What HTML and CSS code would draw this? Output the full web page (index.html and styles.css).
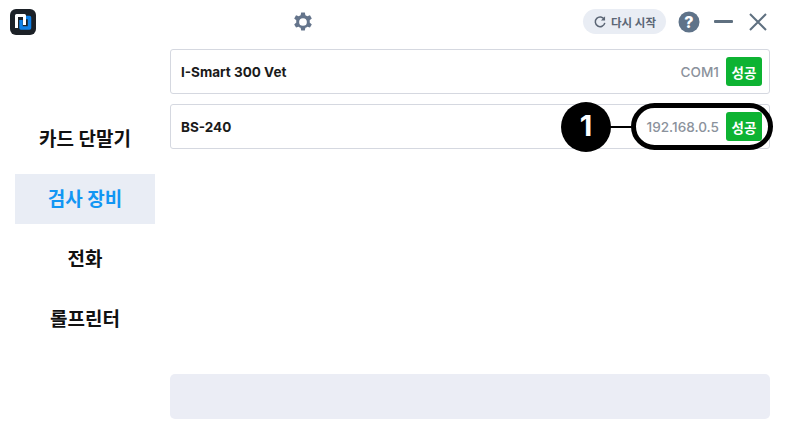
FILE: index.html
```html
<!DOCTYPE html>
<html lang="ko">
<head>
    <meta charset="UTF-8" />
    <title>장비 설정</title>
    <link rel="stylesheet" href="styles.css">
</head>
<body>
    <div class="app">
        <header class="titlebar">
            <svg class="logo" viewBox="0 0 26 26">
                <rect width="26" height="26" rx="6" fill="#1c2127" />
                <path d="M11 11v8h8.500V8.500H16" fill="none" stroke="#0f80e6" stroke-width="3.500" stroke-linejoin="round" />
                <path d="M6.500 19V6.500h8V16" fill="none" stroke="#fff" stroke-width="3" stroke-linejoin="round" />
            </svg>
            <button class="gear-btn">
                <svg viewBox="0 0 24 24" width="22" height="22">
                    <path fill="#64748b" fill-rule="evenodd" d="M10 1.500h4l.6 3a8 8 0 0 1 2.100 1.200l2.900-1 2 3.500-2.300 2a8 8 0 0 1 0 2.400l2.300 2-2 3.500-2.900-1a8 8 0 0 1-2.100 1.200l-.6 3h-4l-.6-3a8 8 0 0 1-2.100-1.200l-2.900 1-2-3.500 2.300-2a8 8 0 0 1 0-2.400l-2.300-2 2-3.500 2.900 1a8 8 0 0 1 2.100-1.200zM12 7.800a4.200 4.200 0 1 0 0 8.400 4.200 4.200 0 0 0 0-8.400z" />
                </svg>
            </button>
            <div class="window-actions">
                <button class="restart-btn">
                    <svg viewBox="0 0 16 16" width="14" height="14">
                        <path d="M13 5.200A5.500 5.500 0 1 0 13.500 9" fill="none" stroke="#5b6675" stroke-width="1.700" />
                        <path d="M13.800 1.500v4.700H9.100z" fill="#5b6675" />
                    </svg>
                    다시 시작
                </button>
                <svg class="help" viewBox="0 0 22 22" width="22" height="22">
                    <circle cx="11" cy="11" r="10.500" fill="#5f7389" />
                    <text x="11" y="16.500" text-anchor="middle" class="help-mark">?</text>
                </svg>
                <span class="minimize"></span>
                <svg class="close" viewBox="0 0 20 20" width="20" height="20">
                    <path d="M2 2l16 16M18 2L2 18" stroke="#5f7080" stroke-width="2" fill="none" />
                </svg>
            </div>
        </header>

        <div class="content">
            <nav class="sidebar">
                <a class="nav-item">카드 단말기</a>
                <a class="nav-item active">검사 장비</a>
                <a class="nav-item">전화</a>
                <a class="nav-item">롤프린터</a>
            </nav>
            <main class="main">
                <div class="device-list">
                    <div class="device">
                        <span class="device-name">I-Smart 300 Vet</span>
                        <span class="device-port">COM1</span>
                        <span class="badge">성공</span>
                    </div>
                    <div class="device">
                        <span class="device-name">BS-240</span>
                        <span class="device-port">192.168.0.5</span>
                        <span class="badge">성공</span>
                        <div class="callout">
                            <span class="callout-num">1</span>
                            <span class="callout-line"></span>
                            <span class="callout-ring"></span>
                        </div>
                    </div>
                </div>
                <div class="footer-bar"></div>
            </main>
        </div>
    </div>
</body>
</html>
```

FILE: styles.css
```css
* {
    margin: 0;
    padding: 0;
    box-sizing: border-box;
}

body {
    width: 785px;
    height: 428px;
    overflow: hidden;
    background-color: #fff;
    font-family: Inter, 'Noto Sans CJK KR', sans-serif;
}

.app {
    height: 100%;
    display: flex;
    flex-direction: column;
}

.titlebar {
    height: 49px;
    padding: 9px 17px 0 10px;
    display: flex;
    align-items: flex-start;
    position: relative;
}

.logo {
    width: 26px;
    height: 26px;
}

.gear-btn {
    margin-left: 256px;
    margin-top: 2px;
    width: 22px;
    height: 22px;
    border: none;
    background: none;
}

.window-actions {
    margin-left: auto;
    display: flex;
    align-items: center;
}

.restart-btn {
    height: 25px;
    width: 83px;
    margin-right: 12px;
    border: none;
    border-radius: 13px;
    background-color: #e9edf4;
    color: #5b6675;
    font-family: inherit;
    font-size: 11.5px;
    font-weight: 700;
    display: flex;
    align-items: center;
    justify-content: center;
    gap: 4px;
}

.help {
    margin-right: 14px;
}

.help-mark {
    fill: #fff;
    font-size: 16px;
    font-weight: 800;
    font-family: Inter, sans-serif;
}

.minimize {
    width: 19px;
    height: 3px;
    margin-right: 15px;
    background-color: #5f7080;
    border-radius: 1px;
}

.content {
    flex: 1;
    display: flex;
    padding: 0 15px 9px 15px;
    gap: 15px;
}

.sidebar {
    width: 140px;
    padding-top: 65px;
    display: flex;
    flex-direction: column;
    gap: 10px;
}

.nav-item {
    height: 50px;
    padding-bottom: 3px;
    display: flex;
    align-items: center;
    justify-content: center;
    font-size: 19px;
    font-weight: 700;
    color: #111;
}

.nav-item.active {
    background-color: #e9edf5;
    color: #1296f3;
}

.main {
    flex: 1;
    display: flex;
    flex-direction: column;
    justify-content: space-between;
}

.device-list {
    display: flex;
    flex-direction: column;
    gap: 10px;
}

.device {
    height: 45px;
    padding: 0 7px 0 10px;
    border: 1px solid #d5d8e0;
    border-radius: 3px;
    display: flex;
    align-items: center;
    position: relative;
}

.device-name {
    flex: 1;
    font-size: 13.5px;
    font-weight: 700;
    color: #1a1a1a;
}

.device-port {
    font-size: 13.6px;
    font-weight: 500;
    color: #8b929c;
    margin-right: 7px;
}

.badge {
    width: 36px;
    height: 29px;
    border-radius: 3px;
    background-color: #0db332;
    color: #fff;
    font-size: 13.5px;
    font-weight: 700;
    display: flex;
    align-items: center;
    justify-content: center;
}

/* annotation drawn over the second row */
.callout {
    position: absolute;
    left: 390px;
    top: -3px;
    width: 212px;
    height: 50px;
    pointer-events: none;
}

.callout-num {
    position: absolute;
    left: 0;
    top: 0;
    width: 50px;
    height: 50px;
    padding-bottom: 3px;
    border-radius: 50%;
    background-color: #000;
    color: #fff;
    font-size: 29px;
    font-weight: 700;
    display: flex;
    align-items: center;
    justify-content: center;
}

.callout-line {
    position: absolute;
    left: 49px;
    top: 24px;
    width: 23px;
    height: 2px;
    background-color: #000;
}

.callout-ring {
    position: absolute;
    left: 70px;
    top: 1px;
    width: 142px;
    height: 47px;
    border: 5px solid #000;
    border-radius: 24px;
}

.footer-bar {
    height: 45px;
    background-color: #ebedf5;
    border-radius: 5px;
}
```
